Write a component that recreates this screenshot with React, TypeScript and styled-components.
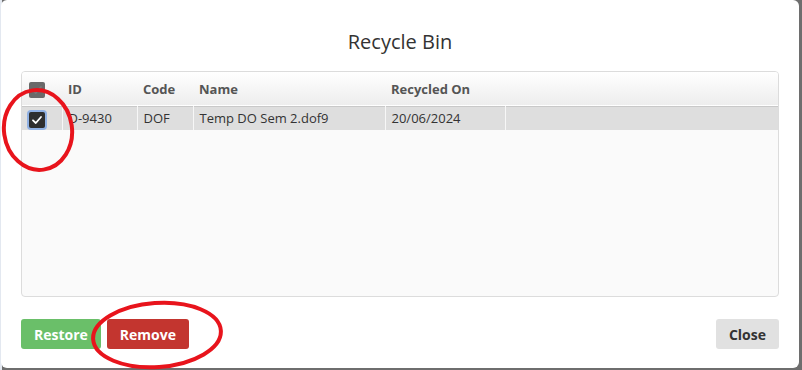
import React from 'react';
import { createGlobalStyle, styled } from 'styled-components';

interface RecycledItem {
  id: string;
  code: string;
  name: string;
  recycledOn: string;
}

const items: RecycledItem[] = [
  { id: 'D-9430', code: 'DOF', name: 'Temp DO Sem 2.dof9', recycledOn: '20/06/2024' },
];

const GlobalStyle = createGlobalStyle`
  html, body {
    margin: 0;
    padding: 0;
  }
  body {
    width: 802px;
    height: 370px;
    overflow: hidden;
    background: linear-gradient(to right, #e3e8f0 0 2px, #6e6e6e 2px);
    font-family: 'Open Sans', 'Noto Sans', sans-serif;
  }
`;

const Stage = styled.div`
  position: relative;
  width: 802px;
  height: 370px;
  padding: 0 3px 2px 1px;
  box-sizing: border-box;
`;

const Dialog = styled.div`
  display: flex;
  flex-direction: column;
  height: 100%;
  background: #ffffff;
  border-radius: 6px;
  padding: 0 20px;
  box-sizing: border-box;
`;

const Title = styled.h2`
  margin: 0;
  height: 71px;
  display: flex;
  align-items: center;
  justify-content: center;
  padding-top: 12px;
  box-sizing: border-box;
  font-size: 20px;
  font-weight: 400;
  color: #333;
`;

const TablePanel = styled.div`
  height: 226px;
  border: 1px solid #dcdcdc;
  border-radius: 4px;
  background: #fafafa;
  overflow: hidden;
  box-sizing: border-box;
`;

const Grid = styled.table`
  width: 100%;
  border-collapse: collapse;
  table-layout: fixed;
  font-size: 13px;
`;

const HeadRow = styled.tr`
  height: 34px;
  background: linear-gradient(#ffffff, #ededed);
  border-bottom: 1px solid #c9c9c9;
`;

const HeadCell = styled.th`
  text-align: left;
  font-weight: 700;
  color: #555;
  padding: 0 6px;
  white-space: nowrap;
`;

const BodyRow = styled.tr<{ $selected?: boolean }>`
  height: 24px;
  background: ${(p) => (p.$selected ? '#dedede' : 'transparent')};
`;

const Cell = styled.td`
  padding: 0 6px;
  color: #333;
  white-space: nowrap;
  border-left: 1px solid #f7f7f7;
`;

const CheckCell = styled.td`
  padding: 0 0 0 7px;
  text-align: left;
`;

const HeadCheckCell = styled.th`
  padding: 0 0 0 7px;
  text-align: left;
`;

const CheckBox = styled.span<{ $checked?: boolean; $focused?: boolean }>`
  display: inline-flex;
  align-items: center;
  justify-content: center;
  width: 16px;
  height: 16px;
  border-radius: 2px;
  background: ${(p) => (p.$checked ? '#2e2e2e' : '#6a6a6a')};
  box-shadow: ${(p) => (p.$focused ? '0 0 0 2px #8fb0e3' : 'none')};
  vertical-align: middle;
  svg {
    display: block;
  }
`;

const Footer = styled.div`
  display: flex;
  align-items: center;
  gap: 6px;
  padding-top: 22px;
`;

const Button = styled.button<{ $tone: 'green' | 'red' | 'grey' }>`
  height: 30px;
  padding: 0 13px;
  border: none;
  border-radius: 3px;
  font-family: inherit;
  font-size: 14px;
  font-weight: 700;
  background: ${(p) =>
    p.$tone === 'green' ? '#6abf69' : p.$tone === 'red' ? '#c3352f' : '#e1e1e1'};
  color: ${(p) => (p.$tone === 'grey' ? '#333' : '#fff')};
  cursor: pointer;
`;

const Spacer = styled.div`
  flex: 1;
`;

const Annotations = styled.svg`
  position: absolute;
  left: 0;
  top: 0;
  pointer-events: none;
`;

const Tick: React.FC<{ color: string }> = ({ color }) => (
  <svg width="12" height="12" viewBox="0 0 12 12">
    <path d="M2 6.3 L4.8 9 L10 3" fill="none" stroke={color} strokeWidth="1.8" strokeLinecap="round" strokeLinejoin="round" />
  </svg>
);

const App: React.FC = () => {
  return (
    <>
      <GlobalStyle />
      <Stage>
        <Dialog>
          <Title>Recycle Bin</Title>
          <TablePanel>
            <Grid>
              <colgroup>
                <col style={{ width: 40 }} />
                <col style={{ width: 75 }} />
                <col style={{ width: 56 }} />
                <col style={{ width: 192 }} />
                <col style={{ width: 120 }} />
                <col />
              </colgroup>
              <thead>
                <HeadRow>
                  <HeadCheckCell>
                    <CheckBox>
                      <Tick color="#7a7a7a" />
                    </CheckBox>
                  </HeadCheckCell>
                  <HeadCell>ID</HeadCell>
                  <HeadCell>Code</HeadCell>
                  <HeadCell>Name</HeadCell>
                  <HeadCell>Recycled On</HeadCell>
                  <HeadCell />
                </HeadRow>
              </thead>
              <tbody>
                {items.map((item) => (
                  <BodyRow key={item.id} $selected>
                    <CheckCell>
                      <CheckBox $checked $focused>
                        <Tick color="#ffffff" />
                      </CheckBox>
                    </CheckCell>
                    <Cell>{item.id}</Cell>
                    <Cell>{item.code}</Cell>
                    <Cell>{item.name}</Cell>
                    <Cell>{item.recycledOn}</Cell>
                    <Cell />
                  </BodyRow>
                ))}
              </tbody>
            </Grid>
          </TablePanel>
          <Footer>
            <Button $tone="green">Restore</Button>
            <Button $tone="red">Remove</Button>
            <Spacer />
            <Button $tone="grey">Close</Button>
          </Footer>
        </Dialog>
        <Annotations width="802" height="370" viewBox="0 0 802 370">
          <ellipse cx="38" cy="130" rx="34" ry="40" transform="rotate(-8 38 130)" fill="none" stroke="#e8141c" strokeWidth="4" />
          <ellipse cx="157" cy="335" rx="64" ry="32" transform="rotate(-4 157 335)" fill="none" stroke="#e8141c" strokeWidth="4" />
        </Annotations>
      </Stage>
    </>
  );
};

export default App;
